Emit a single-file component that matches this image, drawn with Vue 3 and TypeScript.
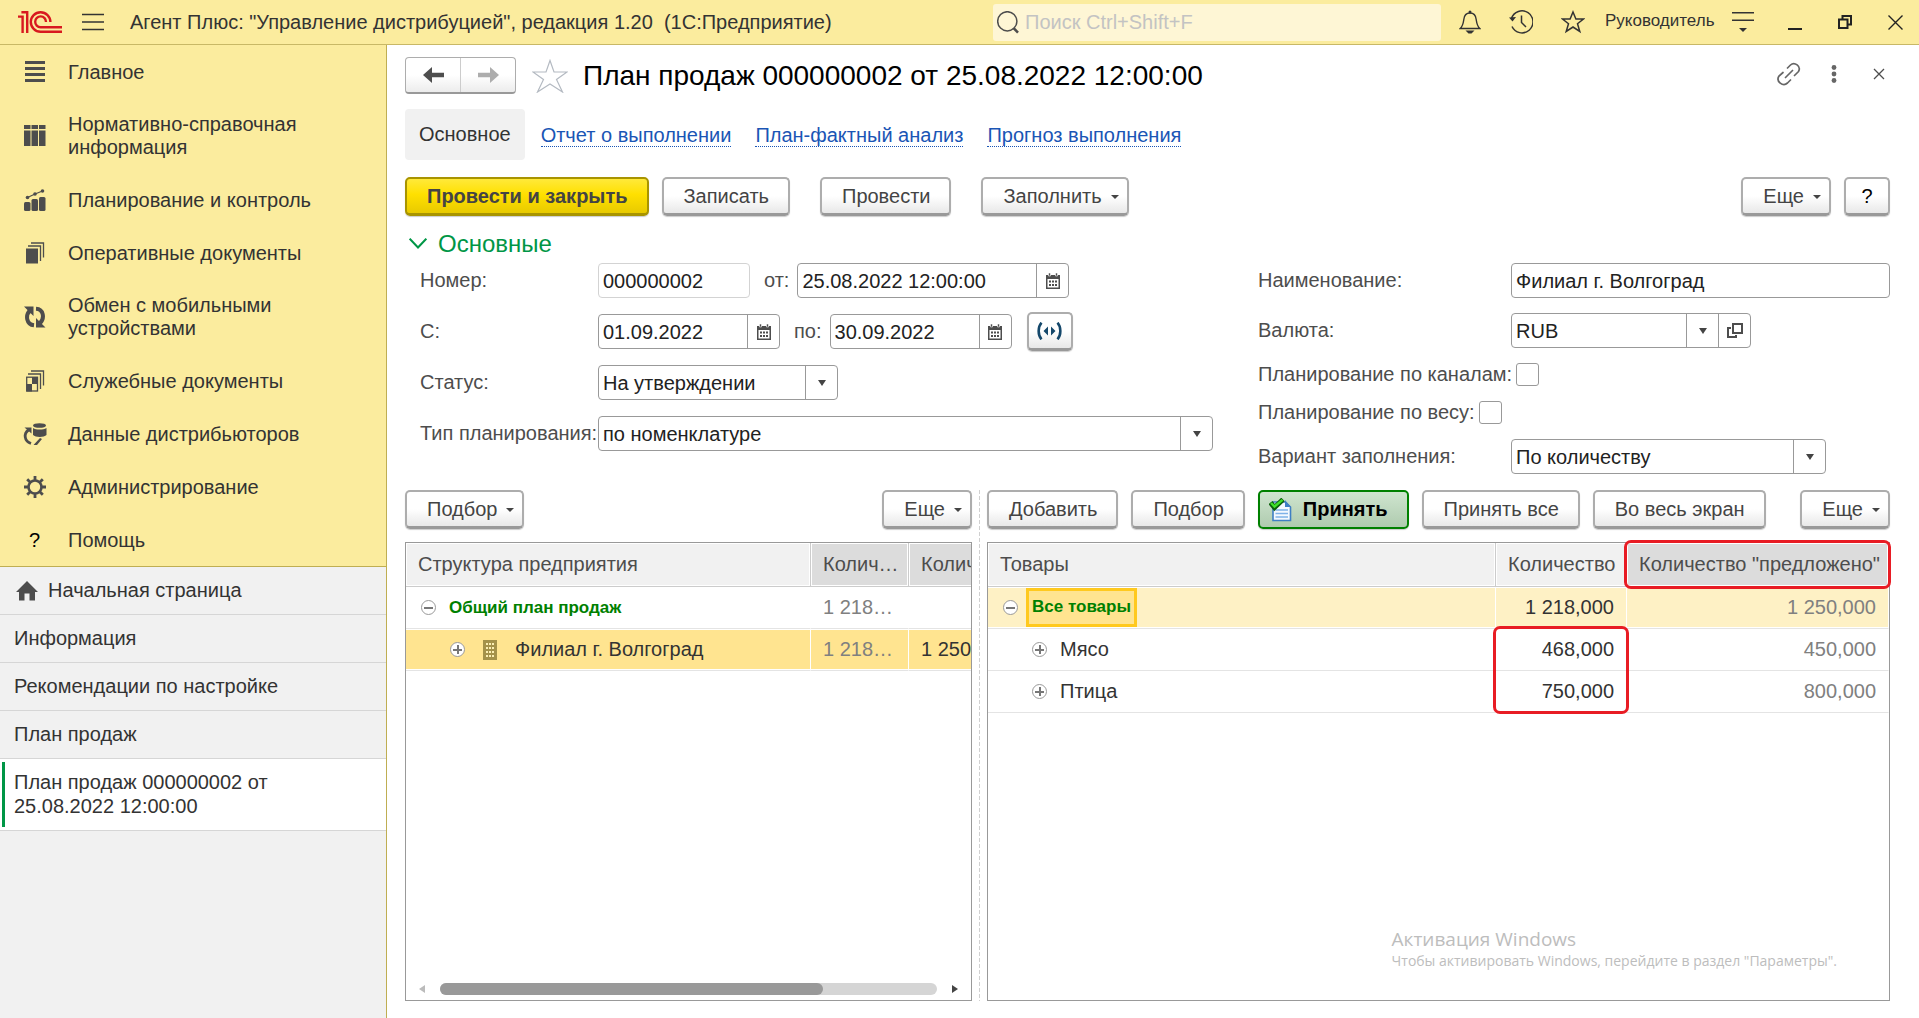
<script setup lang="ts">
import { ref } from 'vue'

interface Section { icon: string; title: string }
interface GoodsRow { title: string; qty: string; offered: string }

const sections: Section[] = [
  { icon: 'lines', title: 'Главное' },
  { icon: 'columns', title: 'Нормативно-справочная информация' },
  { icon: 'chart', title: 'Планирование и контроль' },
  { icon: 'docs', title: 'Оперативные документы' },
  { icon: 'sync', title: 'Обмен с мобильными устройствами' },
  { icon: 'service', title: 'Служебные документы' },
  { icon: 'data', title: 'Данные дистрибьюторов' },
  { icon: 'gear', title: 'Администрирование' },
  { icon: 'help', title: 'Помощь' },
]

const openWindows: string[] = ['Информация', 'Рекомендации по настройке', 'План продаж']
const links: string[] = ['Отчет о выполнении', 'План-фактный анализ', 'Прогноз выполнения']

const goods: GoodsRow[] = [
  { title: 'Мясо', qty: '468,000', offered: '450,000' },
  { title: 'Птица', qty: '750,000', offered: '800,000' },
]

const number = ref('000000002')
const docDate = ref('25.08.2022 12:00:00')
const dateFrom = ref('01.09.2022')
const dateTo = ref('30.09.2022')
const docName = ref('Филиал г. Волгоград')
const byChannels = ref(false)
const byWeight = ref(false)
</script>

<template>
  <div class="app">
    <header class="top">
      <svg class="logo" width="44" height="22" viewBox="0 0 44 22" fill="none" stroke="#d8191f" stroke-width="2.4">
        <path d="M0 5.6H4.6V22M3.4 1.2H9.2V22" />
        <path d="M32.4 11A9.8 9.8 0 1 0 22.6 20.8H44" />
        <path d="M28 11A5.4 5.4 0 1 0 22.6 16.2H44" />
      </svg>
      <button class="ico burger" aria-label="Меню">
        <svg width="22" height="18" viewBox="0 0 22 18" stroke="#333" stroke-width="1.5"><path d="M0 1.5H22M0 9H22M0 16.5H22" /></svg>
      </button>
      <div class="app-title">Агент Плюс: "Управление дистрибуцией", редакция 1.20&nbsp; (1С:Предприятие)</div>
      <label class="search">
        <svg width="22" height="23" viewBox="0 0 22 23" fill="none" stroke="#4d4d4d"><circle cx="10.3" cy="10.3" r="9.6" stroke-width="1.5" /><path d="M16.6 17.2L21 21.6" stroke-width="2.6" /></svg>
        <input type="text" placeholder="Поиск Ctrl+Shift+F" aria-label="Поиск" />
      </label>
      <div class="tools">
        <button class="ico" aria-label="Уведомления">
          <svg width="22" height="24" viewBox="0 0 22 24" fill="none" stroke="#333" stroke-width="1.4"><path d="M1.2 18.5C4 16 4.3 13 4.8 9.5C5.2 5.5 7.5 3 11 3S16.8 5.5 17.2 9.5C17.7 13 18 16 20.8 18.5Z" /><circle cx="11" cy="2" r="1.5" fill="#333" stroke="none" /><path d="M6.5 20.5H15.5L12.5 23.5H9.5Z" fill="#333" stroke="none" /></svg>
        </button>
        <button class="ico" aria-label="История">
          <svg width="24" height="24" viewBox="0 0 24 24" fill="none" stroke="#333" stroke-width="1.5"><path d="M2.5 8.5A11 11 0 1 1 3 16.5" /><path d="M12.5 5.5V12.5L17 17" /><path d="M0 7.5L7 7L3.5 11.5Z" fill="#333" stroke="none" /></svg>
        </button>
        <button class="ico" aria-label="Избранное">
          <svg width="24" height="24" viewBox="0 0 24 24" fill="none" stroke="#333" stroke-width="1.5"><path d="M12 2L14.9 9H22.5L16.5 13.7L18.8 21.5L12 17L5.2 21.5L7.5 13.7L1.5 9H9.1Z" /></svg>
        </button>
        <span class="user">Руководитель</span>
        <button class="ico" aria-label="Настройка">
          <svg width="22" height="20" viewBox="0 0 22 20" fill="#333"><path d="M0 0H22V1.5H0ZM0 7.5H22V9H0ZM7 16H15L11 20Z" /></svg>
        </button>
      </div>
      <div class="win">
        <button class="ico" aria-label="Свернуть"><svg width="14" height="16" viewBox="0 0 14 16"><path d="M0 14H14V16H0Z" fill="#222" /></svg></button>
        <button class="ico" aria-label="Восстановить"><svg width="14" height="14" viewBox="0 0 14 14" fill="none" stroke="#222" stroke-width="2"><path d="M1 4.5H9.5V13H1ZM4.5 4V1H13V9.5H10" /></svg></button>
        <button class="ico" aria-label="Закрыть"><svg width="15" height="15" viewBox="0 0 15 15" stroke="#222" stroke-width="1.4"><path d="M.5 .5L14.5 14.5M14.5 .5L.5 14.5" /></svg></button>
      </div>
    </header>

    <div class="body">
      <aside class="side">
        <nav class="sections">
          <a v-for="s in sections" :key="s.title" href="#" class="section">
            <span class="section-icon">
              <svg v-if="s.icon === 'lines'" width="22" height="22" viewBox="0 0 22 22" fill="#4d4d4d"><path d="M1 0H21V3H1ZM1 6H21V9H1ZM1 12H21V15H1ZM1 18H21V21H1Z" /></svg>
              <svg v-else-if="s.icon === 'columns'" width="22" height="22" viewBox="0 0 22 22" fill="#4d4d4d"><path d="M0 0H6.5V4H0ZM7.5 0H14V4H7.5ZM15 0H21.5V4H15ZM0 5.5H6.5V21H0ZM7.5 5.5H14V21H7.5ZM15 5.5H21.5V21H15Z" /></svg>
              <svg v-else-if="s.icon === 'chart'" width="22" height="22" viewBox="0 0 22 22" fill="#4d4d4d"><rect y="13" width="6.5" height="9" rx="1.5" /><rect x="7.5" y="10" width="6.5" height="12" rx="1.5" /><rect x="15" y="8" width="6.5" height="14" rx="1.5" /><circle cx="3.5" cy="8.5" r="1.8" /><circle cx="11" cy="5" r="1.8" /><circle cx="18.5" cy="2" r="1.8" /><path d="M3.5 8.5L11 5L18.5 2" fill="none" stroke="#4d4d4d" stroke-width="1.2" /></svg>
              <svg v-else-if="s.icon === 'docs'" width="22" height="22" viewBox="0 0 22 22" fill="none" stroke="#4d4d4d" stroke-width="1.3"><rect x="2" y="6.5" width="12" height="15" fill="#4d4d4d" stroke="none" /><path d="M4 4H16.5V19M7 1H19.5V15.5" /></svg>
              <svg v-else-if="s.icon === 'sync'" width="22" height="22" viewBox="0 0 22 22" fill="none" stroke="#4d4d4d" stroke-width="4"><path d="M10 19.3C2.5 18.500 1 9.5 6 4.5M12 2.700C19.500 3 21 12 16 17.2" /><path d="M0 .5H9.500V10ZM21.5 21.500H12V12Z" fill="#4d4d4d" stroke="none" /></svg>
              <svg v-else-if="s.icon === 'service'" width="22" height="22" viewBox="0 0 22 22" fill="none" stroke="#4d4d4d" stroke-width="1.3"><rect x="2.7" y="7.2" width="10.8" height="13.8" /><path d="M8 7H14V14H8ZM2.5 14H8V21.5H2.5Z" fill="#4d4d4d" stroke="none" /><path d="M4 4H16.5V19M7 1H19.5V15.5" /></svg>
              <svg v-else-if="s.icon === 'data'" width="24" height="22" viewBox="0 0 24 22" fill="#4d4d4d"><ellipse cx="16.5" cy="2.5" rx="6.500" ry="2.3" /><path d="M10 5C13 7 20 7 23.5 5V12C21 14.5 12.5 14.5 10 12Z" /><path d="M8 20.5C1 18 .5 10.5 5.5 7" fill="none" stroke="#4d4d4d" stroke-width="2.8" /><path d="M1.5 4.5H8.5V10.5ZM17 15L19 16L14 22H10.5Z" /></svg>
              <svg v-else-if="s.icon === 'gear'" width="22" height="22" viewBox="0 0 22 22" fill="none" stroke="#4d4d4d"><circle cx="11" cy="11" r="6.5" stroke-width="2.6" /><path d="M11 0V4M11 18V22M0 11H4M18 11H22M3.2 3.2L6 6M16 16L18.8 18.8M18.8 3.2L16 6M6 16L3.2 18.8" stroke-width="2.8" /></svg>
              <b v-else class="q">?</b>
            </span>
            <span class="section-title">{{ s.title }}</span>
          </a>
        </nav>
        <nav class="windows">
          <a href="#" class="window home">
            <svg width="22" height="20" viewBox="0 0 22 20" fill="#4d4d4d"><path d="M11 0L22 11H19V19.5H13.5V12.5H8.5V19.5H3V11H0Z" /></svg>
            <span>Начальная страница</span>
          </a>
          <a v-for="w in openWindows" :key="w" href="#" class="window">{{ w }}</a>
          <a href="#" class="window active"><span class="window-text">План продаж 000000002 от 25.08.2022 12:00:00</span></a>
        </nav>
      </aside>

      <main class="main">
        <div class="head">
          <div class="history">
            <button aria-label="Назад"><svg width="21" height="16" viewBox="0 0 21 16" fill="#4d4d4d"><path d="M0 8L9 0V5.8H21V10.2H9V16Z" /></svg></button>
            <button aria-label="Вперед"><svg width="21" height="16" viewBox="0 0 21 16" fill="#adadad"><path d="M21 8L12 0V5.8H0V10.2H12V16Z" /></svg></button>
          </div>
          <button class="ico fav" aria-label="В избранное">
            <svg width="36" height="34" viewBox="0 0 36 34" fill="none" stroke="#b4bac2" stroke-width="1.2"><path d="M18 1.5L22 13H35L24.5 20.5L30.5 33L18 25L5.5 33L11.5 20.5L1 13H14Z" /></svg>
          </button>
          <h1>План продаж 000000002 от 25.08.2022 12:00:00</h1>
          <div class="form-tools">
            <button class="ico" aria-label="Ссылка">
              <svg width="24" height="24" viewBox="0 0 24 24" fill="none" stroke="#666" stroke-width="1.7" stroke-linecap="round"><path d="M10.5 6L13.5 3C17.5 -.8 24.5 4.5 21.5 9.5L17.5 13.5M13.5 18L10.5 21C6 25 -1.5 19.5 2 14L6 10.5M8.5 15.5L15.5 8.5" /></svg>
            </button>
            <button class="ico dots" aria-label="Еще действия">
              <svg width="6" height="18" viewBox="0 0 6 18" fill="#666"><circle cx="3" cy="2.5" r="2.4" /><circle cx="3" cy="9" r="2.4" /><circle cx="3" cy="15.5" r="2.4" /></svg>
            </button>
            <button class="ico" aria-label="Закрыть форму">
              <svg width="12" height="12" viewBox="0 0 12 12" stroke="#4d4d4d" stroke-width="1.3"><path d="M1 1L11 11M11 1L1 11" /></svg>
            </button>
          </div>
        </div>

        <nav class="tabs">
          <span class="tab">Основное</span>
          <a v-for="l in links" :key="l" href="#">{{ l }}</a>
        </nav>

        <div class="bar">
          <button class="btn primary">Провести и закрыть</button>
          <button class="btn">Записать</button>
          <button class="btn apart">Провести</button>
          <button class="btn drop apart">Заполнить<i class="caret"></i></button>
          <button class="btn drop push">Еще<i class="caret"></i></button>
          <button class="btn small help">?</button>
        </div>

        <h2><svg width="18" height="11" viewBox="0 0 18 11" fill="none" stroke="#009646" stroke-width="2"><path d="M.7 .7L9 9.5L17.3 .7" /></svg>Основные</h2>

        <div class="form">
          <div class="left">
            <div class="row">
              <label for="num" class="cap">Номер:</label>
              <span class="field w152 pale"><input id="num" v-model="number" readonly /></span>
              <label for="dt" class="mid">от:</label>
              <span class="field w272"><input id="dt" v-model="docDate" />
                <button class="add" aria-label="Календарь"><svg width="14" height="16" viewBox="0 0 14 16"><path d="M0 2H14V16H0ZM1.5 6V14.5H12.5V6Z" fill="#4d4d4d" fill-rule="evenodd" /><path d="M2.5 0H4.5V3H2.5ZM9.5 0H11.5V3H9.5Z" fill="#4d4d4d" stroke="#fff" stroke-width=".6" /><path d="M3 8.5H11M3 12H11" stroke="#4d4d4d" stroke-width="2" stroke-dasharray="2 1" /></svg></button>
              </span>
            </div>
            <div class="row">
              <label for="from" class="cap">С:</label>
              <span class="field w182"><input id="from" v-model="dateFrom" />
                <button class="add" aria-label="Календарь"><svg width="14" height="16" viewBox="0 0 14 16"><path d="M0 2H14V16H0ZM1.5 6V14.5H12.5V6Z" fill="#4d4d4d" fill-rule="evenodd" /><path d="M2.5 0H4.5V3H2.5ZM9.5 0H11.5V3H9.5Z" fill="#4d4d4d" stroke="#fff" stroke-width=".6" /><path d="M3 8.5H11M3 12H11" stroke="#4d4d4d" stroke-width="2" stroke-dasharray="2 1" /></svg></button>
              </span>
              <label for="to" class="mid">по:</label>
              <span class="field w182"><input id="to" v-model="dateTo" />
                <button class="add" aria-label="Календарь"><svg width="14" height="16" viewBox="0 0 14 16"><path d="M0 2H14V16H0ZM1.5 6V14.5H12.5V6Z" fill="#4d4d4d" fill-rule="evenodd" /><path d="M2.5 0H4.5V3H2.5ZM9.5 0H11.5V3H9.5Z" fill="#4d4d4d" stroke="#fff" stroke-width=".6" /><path d="M3 8.5H11M3 12H11" stroke="#4d4d4d" stroke-width="2" stroke-dasharray="2 1" /></svg></button>
              </span>
              <button class="btn small period" aria-label="Выбрать период">
                <svg width="25" height="18" viewBox="0 0 25 18" fill="none" stroke="#15486b" stroke-width="2.6"><path d="M4.5 .7C.7 5 .7 13 4.5 17.3M20.5 .7C24.3 5 24.3 13 20.5 17.3" /><path d="M11 4.5V13.5L6.5 9ZM14 4.5V13.5L18.5 9Z" fill="#15486b" stroke="none" /></svg>
              </button>
            </div>
            <div class="row">
              <label for="status" class="cap">Статус:</label>
              <span class="field w240"><select id="status"><option>На утверждении</option></select><span class="add"><i class="tri"></i></span></span>
            </div>
            <div class="row">
              <label for="kind" class="cap">Тип планирования:</label>
              <span class="field grow"><select id="kind"><option>по номенклатуре</option></select><span class="add"><i class="tri"></i></span></span>
            </div>
          </div>
          <div class="right">
            <div class="row">
              <label for="name" class="cap">Наименование:</label>
              <span class="field grow"><input id="name" v-model="docName" /></span>
            </div>
            <div class="row">
              <label for="cur" class="cap">Валюта:</label>
              <span class="field w240"><select id="cur"><option>RUB</option></select><span class="add"><i class="tri"></i></span>
                <button class="add" aria-label="Открыть"><svg width="16" height="15" viewBox="0 0 16 15" fill="none" stroke="#4d4d4d" stroke-width="2"><path d="M6 1H15V10H6ZM4 5H1V14H9V12" /></svg></button>
              </span>
            </div>
            <label class="check">Планирование по каналам:<input v-model="byChannels" type="checkbox" /></label>
            <label class="check">Планирование по весу:<input v-model="byWeight" type="checkbox" /></label>
            <div class="row">
              <label for="fill" class="cap">Вариант заполнения:</label>
              <span class="field w315"><select id="fill"><option>По количеству</option></select><span class="add"><i class="tri"></i></span></span>
            </div>
          </div>
        </div>

        <div class="panes">
          <section class="pane">
            <div class="bar">
              <button class="btn drop">Подбор<i class="caret"></i></button>
              <button class="btn drop push">Еще<i class="caret"></i></button>
            </div>
            <div class="grid clip">
              <table class="org">
                <colgroup><col class="c1" /><col class="c2" /><col class="c3" /></colgroup>
                <thead><tr><th>Структура предприятия</th><th class="dark">Колич…</th><th class="dark">Количество</th></tr></thead>
                <tbody>
                  <tr>
                    <td><span class="tree"><button class="node minus" aria-label="Свернуть узел"></button><b class="total">Общий план продаж</b></span></td>
                    <td class="dim">1 218…</td><td></td>
                  </tr>
                  <tr class="selected">
                    <td><span class="tree sub"><button class="node plus" aria-label="Развернуть узел"></button>
                      <svg width="14" height="20" viewBox="0 0 14 20"><path d="M0 0H14V20H0Z" fill="#a4914a" /><path d="M3 3H5V5H3ZM6 3H8V5H6ZM9 3H11V5H9ZM3 7H5V9H3ZM6 7H8V9H6ZM9 7H11V9H9ZM3 11H5V13H3ZM6 11H8V13H6ZM9 11H11V13H9ZM3 15H5V17H3ZM6 15H8V17H6ZM9 15H11V17H9Z" fill="#fbeeb4" /></svg>
                      <span>Филиал г. Волгоград</span></span></td>
                    <td class="dim">1 218…</td><td>1 250,000</td>
                  </tr>
                </tbody>
              </table>
              <div class="scroll">
                <i class="arrow prev"></i>
                <div class="track"><div class="thumb"></div></div>
                <i class="arrow next"></i>
              </div>
            </div>
          </section>

          <div class="splitter"></div>

          <section class="pane">
            <div class="bar">
              <button class="btn">Добавить</button>
              <button class="btn">Подбор</button>
              <button class="btn accept">
                <svg width="23" height="24" viewBox="0 0 23 24"><path d="M4 4H16L21.5 9V22.5H4Z" fill="#f4f9ff" stroke="#3f7fc4" stroke-width="1.6" /><path d="M16 2V9H22Z" fill="#3f7fc4" /><path d="M6.5 12H19M6.5 15.5H19M6.5 19H19" stroke="#7fb2e8" stroke-width="1.5" /><path d="M1.5 4.5L5.5 9.5L14 1.5" fill="none" stroke="#0b5e0b" stroke-width="5" /><path d="M2 5L5.5 8.5L13.5 1.8" fill="none" stroke="#3fe02a" stroke-width="2.4" /></svg>Принять
              </button>
              <button class="btn">Принять все</button>
              <button class="btn">Во весь экран</button>
              <button class="btn drop push">Еще<i class="caret"></i></button>
            </div>
            <div class="grid">
              <table class="goods">
                <colgroup><col /><col class="g2" /><col class="g3" /></colgroup>
                <thead><tr><th>Товары</th><th>Количество</th><th class="dark marked">Количество "предложено"<i class="mark"></i></th></tr></thead>
                <tbody>
                  <tr class="current">
                    <td><span class="tree"><button class="node minus" aria-label="Свернуть узел"></button><b class="total cell">Все товары</b></span></td>
                    <td class="num">1 218,000</td><td class="num dim">1 250,000</td>
                  </tr>
                  <tr v-for="(g, i) in goods" :key="g.title">
                    <td><span class="tree sub"><button class="node plus" aria-label="Развернуть узел"></button><span>{{ g.title }}</span></span></td>
                    <td class="num" :class="{ marked: i === 0 }">{{ g.qty }}<i v-if="i === 0" class="mark double"></i></td>
                    <td class="num dim">{{ g.offered }}</td>
                  </tr>
                </tbody>
              </table>
              <div class="watermark"><div>Активация Windows</div><p>Чтобы активировать Windows, перейдите в раздел "Параметры".</p></div>
            </div>
          </section>
        </div>
      </main>
    </div>
  </div>
</template>

<style>
body { background: #fff; }
</style>

<style scoped>
.app, .app * { box-sizing: border-box; }
.app { min-height: 100vh; display: flex; flex-direction: column; font: 20px/23px "Liberation Sans", Arial, sans-serif; color: #333; }
a { color: inherit; text-decoration: none; }
button, input, select { font: inherit; color: inherit; margin: 0; }
svg { display: block; flex: none; }
.ico { border: 0; padding: 0; background: none; flex: none; }

.top { display: flex; align-items: center; height: 45px; padding: 0 16px 0 18px; background: #fbec9e; border-bottom: 1px solid #c8b866; }
.burger { margin: 0 26px 0 20px; }
.app-title { flex: 1; white-space: nowrap; }
.search { display: flex; align-items: center; gap: 6px; width: 448px; height: 37px; padding: 0 4px; margin-right: 18px; background: #fef6d5; border-radius: 3px; }
.search input { flex: 1; min-width: 0; border: 0; padding: 0; background: none; outline: 0; }
.search input::placeholder { color: #c3c3c3; opacity: 1; }
.tools { display: flex; align-items: center; gap: 28px; }
.user { width: 107px; margin: 0 -8px; font-size: 17px; white-space: nowrap; line-height: 20px; padding-bottom: 3px; }
.win { display: flex; align-items: center; gap: 36px; margin-left: 34px; }

.body { flex: 1; display: flex; }
.side { width: 387px; flex: none; background: #f1f1f1; border-right: 1px solid #bfae52; }
.sections { background: #fbec9e; border-bottom: 1px solid #bfae52; }
.section { display: flex; align-items: center; gap: 21px; min-height: 53px; padding: 15px 60px 14px 22px; }
.section-icon { width: 25px; flex: none; display: flex; justify-content: center; }
.q { font-weight: 400; color: #000; }
.window { display: block; padding: 12px 60px 12px 14px; border-bottom: 1px solid #d6d6d6; }
.home { display: flex; align-items: center; gap: 10px; padding-left: 16px; }
.active { padding: 3px 60px 3px 2px; background: #fff; }
.window-text { display: block; padding: 8px 0 9px 9px; border-left: 3px solid #009646; line-height: 24px; }

.main { flex: 1; min-width: 0; display: flex; flex-direction: column; padding: 12px 29px 17px 18px; }
.head { display: flex; align-items: center; height: 37px; padding-right: 5px; }
.history { display: flex; width: 111px; height: 37px; border: 1px solid #adadad; border-bottom: 2px solid #999; border-radius: 4px; background: linear-gradient(#fff 50%, #ececec); }
.history button { flex: 1; display: flex; align-items: center; justify-content: center; padding: 0; border: 0; background: none; }
.history button + button { border-left: 1px solid #ccc; }
.fav { margin: 0 15px 0 16px; }
h1 { flex: 1; margin: 0; font-weight: 400; font-size: 28px; line-height: 32px; color: #000; white-space: nowrap; }
.form-tools { display: flex; align-items: center; padding-bottom: 3px; }
.dots { margin: 0 36px 0 30px; }

.tabs { display: flex; align-items: center; gap: 24px; height: 51px; margin-top: 15px; line-height: 21px; }
.tab { align-self: stretch; display: flex; align-items: center; margin-right: -8px; padding: 0 14px; background: #f1f1f1; border-radius: 4px; }
.tabs a { padding-top: 2px; color: #1a55b5; border-bottom: 1px dotted #1a55b5; }

.bar { display: flex; gap: 13px; }
.main > .bar { margin-top: 17px; }
.btn { display: flex; align-items: center; justify-content: center; height: 39px; padding: 1px 19px 0 20px; border: 2px solid #adadad; border-bottom: 3px solid #999; border-radius: 5px; background: linear-gradient(#fff 50%, #e8e8e8); box-shadow: 0 1px 1px #ccc; color: #444; white-space: nowrap; }
.primary { border-color: #a89400; background: linear-gradient(#ffe93a, #ffe000 45%, #e8ca00); font-weight: 700; }
.accept { gap: 11px; padding: 0 19px 0 9px; border: 2px solid #008000; background: linear-gradient(#cfe5cf, #afcbaf); font-weight: 700; color: #000; }
.apart { margin-left: 17px; }
.push { margin-left: auto; }
.drop { gap: 9px; padding-right: 8px; }
.small { width: 46px; padding: 0; }
.help { color: #000; }
.caret { border: 4px solid transparent; border-top-color: #444; border-bottom: 0; }

h2 { display: flex; align-items: center; gap: 11px; margin: 13px 0 5px 4px; font-weight: 400; font-size: 24px; line-height: 29px; color: #009646; }
.form { display: grid; grid-template-columns: minmax(0, 793fr) minmax(0, 632fr); gap: 45px; padding-left: 15px; color: #4d4d4d; }
.left, .right { display: flex; flex-direction: column; gap: 16px; }
.right { gap: 15px; }
.row { display: flex; align-items: center; height: 35px; }
.cap { width: 178px; flex: none; white-space: nowrap; }
.right .cap { width: 253px; }
.mid { margin: 0 8px 0 14px; }
.field { display: flex; height: 35px; border: 1px solid #999; border-radius: 4px; background: #fff; color: #222; overflow: hidden; }
.pale { border-color: #d3d3d3; }
.field input, .field select { flex: 1; min-width: 0; border: 0; padding: 1px 4px 0; background: none; outline: 0; appearance: none; }
.add { width: 32px; flex: none; display: flex; align-items: center; justify-content: center; padding: 0; border: 0; border-left: 1px solid #999; background: none; }
.tri { border: 4px solid transparent; border-top: 6px solid #444; border-bottom: 0; }
.w152 { width: 152px; } .w182 { width: 182px; } .w240 { width: 240px; } .w272 { width: 272px; } .w315 { width: 315px; }
.grow { flex: 1; }
.period { margin-left: 15px; }
.check { display: flex; align-items: center; gap: 4px; height: 23px; }
.check input { appearance: none; width: 23px; height: 23px; border: 1px solid #999; border-radius: 3px; background: #fff; }

.panes { flex: 1; display: grid; grid-template-columns: minmax(0, 567fr) 15px minmax(0, 903fr); margin-top: 16px; }
.pane { display: flex; flex-direction: column; gap: 13px; }
.splitter { width: 1px; margin-left: 7px; background: repeating-linear-gradient(#d0d0d0 0 4px, transparent 4px 6px); }
.grid { position: relative; flex: 1; display: flex; flex-direction: column; border: 1px solid #999; }
.clip { overflow: hidden; }
table { table-layout: fixed; border-spacing: 0; width: 100%; }
.org { width: 770px; }
.c1 { width: 405px; } .c2 { width: 98px; } .g2 { width: 131px; } .g3 { width: 262px; }
th { height: 44px; padding: 0 4px 0 12px; text-align: left; font-weight: 400; color: #4d4d4d; background: #f1f1f1; border-right: 1px solid #ccc; border-bottom: 1px solid #ccc; box-shadow: inset 0 0 0 1px #fff; overflow: hidden; text-overflow: ellipsis; white-space: nowrap; }
.dark { background: #dcdcdc; }
td { height: 42px; padding: 0 12px; border-right: 1px solid #fff; border-bottom: 1px solid #e4e4e4; box-shadow: inset 0 1px #fff, inset 0 -1px #fff; overflow: hidden; white-space: nowrap; }
th.marked, td.marked { position: relative; overflow: visible; }
.dim { color: #808080; }
.num { text-align: right; }
.selected td { background: #ffe490; }
.current td { background: #fef1c5; }
.tree { display: flex; align-items: center; gap: 13px; margin-left: 3px; height: 39px; }
.sub { margin-left: 32px; }
.org .sub { gap: 18px; }
.node { position: relative; width: 15px; height: 15px; flex: none; padding: 0; border: 1px solid #999; border-radius: 50%; background: #fff linear-gradient(#777, #777) center / 9px 2px no-repeat; }
.plus { background: linear-gradient(#777, #777) center / 9px 2px no-repeat, linear-gradient(#777, #777) center / 2px 9px no-repeat, #fff; }
.total { font-size: 17px; color: #008000; }
.cell { margin-left: -5px; height: 39px; padding: 4px 3px; border: 3px solid #ffc91e; background: #ffe490; }
.mark { position: absolute; inset: -3px; border: 3px solid #e81c24; border-radius: 7px; }
.double { bottom: -44px; }

.scroll { display: flex; align-items: center; gap: 15px; height: 12px; margin: auto 13px 5px; }
.track { flex: 1; height: 12px; border-radius: 6px; background: #d5d5d5; }
.thumb { width: 77%; height: 12px; border-radius: 6px; background: #999; }
.arrow { border: 4px solid transparent; }
.prev { border-right: 6px solid #bbb; border-left: 0; }
.next { border-left: 6px solid #444; border-right: 0; }
.watermark { position: absolute; right: 52px; bottom: 29px; font-family: "Open Sans", sans-serif; font-size: 19px; line-height: 24px; color: #bdbdbd; }
.watermark p { margin: 0; font-size: 14px; line-height: 20px; white-space: nowrap; }
</style>
